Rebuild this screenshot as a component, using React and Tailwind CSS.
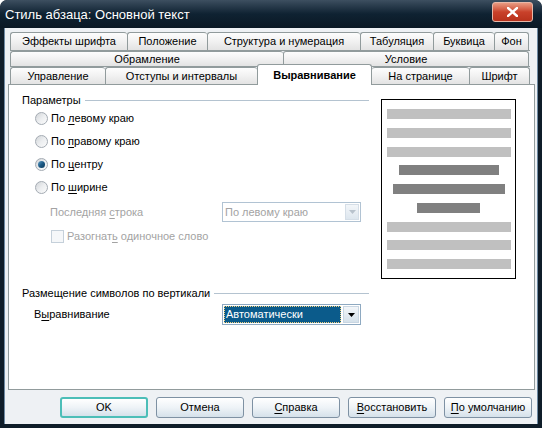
import React from "react";

const U = ({ children }) => <span className="underline underline-offset-[2px]">{children}</span>;

function Tab({ w, label, selected, noLeft, last }) {
  if (selected) {
    return (
      <div
        className={`relative z-10 -mb-px h-[21px] bg-white border-x border-t border-[#919b9c] rounded-t-[3px] flex items-center justify-center font-bold text-black`}
        style={{ width: w }}
      >
        {label}
      </div>
    );
  }
  return (
    <div
      className={`h-full flex items-center justify-center border-t border-[#919b9c] rounded-t-[3px] bg-gradient-to-b from-[#fdfdfd] via-[#f1f1f1] to-[#e3e3e3] text-black ${noLeft ? "" : "border-l"} ${last ? "border-r" : ""}`}
      style={{ width: w }}
    >
      {label}
    </div>
  );
}

function Radio({ checked, children }) {
  return (
    <div className="h-[23px] flex items-center pl-[26px]">
      <div className="w-[13px] h-[13px] rounded-full border border-[#a4abb3] bg-gradient-to-br from-[#d2d5d8] via-[#eceef0] to-[#fbfbfb] flex items-center justify-center">
        {checked && (
          <div className="w-[7px] h-[7px] rounded-full bg-gradient-to-br from-[#5fa0c8] via-[#1d5a85] to-[#0c3a5a]" />
        )}
      </div>
      <span className="ml-[3px]">{children}</span>
    </div>
  );
}

function Button({ children, def }) {
  return (
    <div
      className={`w-[88px] h-[21px] rounded-[3px] flex items-center justify-center bg-gradient-to-b from-[#ffffff] via-[#eef3f7] to-[#d5e1ea] text-black ${
        def ? "border-2 border-[#4cbeb8]" : "border border-[#7e91a3]"
      }`}
    >
      {children}
    </div>
  );
}

function Arrow({ color }) {
  return (
    <svg width="7" height="4" viewBox="0 0 7 4">
      <path d="M0 0 H7 L3.5 4 Z" fill={color} />
    </svg>
  );
}

export default function App() {
  return (
    <div className="w-[542px] h-[428px] bg-white">
      <div className="w-[542px] h-[428px] bg-[#0f1d29] rounded-t-[7px] flex flex-col px-[4px] pb-[4px] font-['Liberation_Sans',Arial,sans-serif] text-[11px] text-black overflow-hidden">
        {/* Title bar */}
        <div className="h-[28px] -mx-[4px] px-[5px] flex items-center justify-between bg-gradient-to-b from-[#3d4f60] via-[#0f2232] to-[#0a1824] rounded-t-[7px]">
          <span className="text-white text-[13px] pt-[1px]">Стиль абзаца: Основной текст</span>
          <div className="w-[41px] h-[20px] mr-[4px] mb-[4px] rounded-[3px] border border-[#e7b8a8] bg-gradient-to-b from-[#e89a82] via-[#c9412a] to-[#b8321c] flex items-center justify-center">
            <svg width="11" height="10" viewBox="0 0 11 10">
              <path d="M1 1 L10 9 M10 1 L1 9" stroke="white" strokeWidth="2.4" strokeLinecap="square" />
            </svg>
          </div>
        </div>

        {/* Body */}
        <div className="flex-1 bg-[#eef1f4] border-x border-[#6e8aa3] flex flex-col">
          {/* tabs */}
          <div className="pl-[5px] pt-[4px] flex flex-col">
            <div className="flex h-[18px]">
              <Tab w={117} label="Эффекты шрифта" />
              <Tab w={80} label="Положение" />
              <Tab w={153} label="Структура и нумерация" />
              <Tab w={73} label="Табуляция" />
              <Tab w={61} label="Буквица" />
              <Tab w={35} label="Фон" last />
            </div>
            <div className="flex h-[16px] border-t border-[#919b9c] w-[520px]">
              <Tab w={273} label="Обрамление" />
              <Tab w={246} label="Условие" last />
            </div>
            <div className="flex items-end h-[18px] border-t border-[#919b9c] w-[520px]">
              <Tab w={95} label="Управление" />
              <Tab w={152} label="Отступы и интервалы" />
              <Tab w={115} label="Выравнивание" selected />
              <Tab w={97} label="На странице" noLeft />
              <Tab w={61} label="Шрифт" last />
            </div>
          </div>

          {/* panel */}
          <div className="ml-[3px] w-[527px] h-[306px] bg-white border border-[#919b9c] flex">
            <div className="w-[360px] flex flex-col">
              <div className="mt-[8px] h-[14px] pl-[13px] flex items-center">
                <span>Параметры</span>
                <div className="ml-[4px] flex-1 h-px bg-[#b4c3d0]" />
              </div>
              <Radio>По <U>л</U>евому краю</Radio>
              <Radio>По <U>п</U>равому краю</Radio>
              <Radio checked>По <U>ц</U>ентру</Radio>
              <Radio>По <U>ш</U>ирине</Radio>

              <div className="mt-[3px] h-[20px] flex items-center pl-[41px]">
                <span className="w-[172px] text-[#a3a3a3]">
                  Последняя <U>с</U>трока
                </span>
                <div className="w-[139px] h-[20px] border border-[#b1c3d3] bg-white flex items-center justify-between pl-[2px] pr-[1px]">
                  <span className="text-[#a3a3a3]">По левому краю</span>
                  <div className="w-[14px] h-[16px] bg-gradient-to-b from-[#f3f6f9] to-[#dde6ee] border border-[#d5dee7] flex items-center justify-center">
                    <Arrow color="#b8c2cc" />
                  </div>
                </div>
              </div>

              <div className="mt-[6px] h-[16px] flex items-center pl-[42px]">
                <div className="w-[13px] h-[13px] border border-[#c5d0da] bg-[#f5f7f9]" />
                <span className="ml-[3px] text-[#a3a3a3]">
                  Разогнат<U>ь</U> одиночное слово
                </span>
              </div>

              <div className="mt-[42px] h-[14px] pl-[13px] flex items-center">
                <span>Размещение символов по вертикали</span>
                <div className="ml-[4px] flex-1 h-px bg-[#b4c3d0]" />
              </div>

              <div className="mt-[4px] h-[21px] flex items-center pl-[25px]">
                <span className="w-[188px]">
                  В<U>ы</U>равнивание
                </span>
                <div className="w-[139px] h-[21px] border border-[#8ea9c1] bg-white flex items-center p-[1px]">
                  <div className="flex-1 h-full bg-[#0b5b8b] outline-1 outline-dotted outline-[#f0d080] -outline-offset-1 text-white flex items-center pl-[2px]">
                    Автоматически
                  </div>
                  <div className="ml-[2px] w-[16px] h-full bg-gradient-to-b from-[#f3f6f9] to-[#d5e1ea] border border-[#c9d6e2] flex items-center justify-center">
                    <Arrow color="#000" />
                  </div>
                </div>
              </div>
            </div>

            <div className="ml-[12px] mt-[14px] w-[135px] h-[180px] border border-black bg-white flex flex-col items-center pt-[9px] gap-[8.75px]">
              <div className="w-[124px] h-[10px] bg-[#c0c0c0]" />
              <div className="w-[124px] h-[10px] bg-[#c0c0c0]" />
              <div className="w-[124px] h-[10px] bg-[#c0c0c0]" />
              <div className="w-[100px] h-[10px] bg-[#808080]" />
              <div className="w-[112px] h-[10px] bg-[#808080]" />
              <div className="w-[63px] h-[10px] bg-[#808080]" />
              <div className="w-[124px] h-[10px] bg-[#c0c0c0]" />
              <div className="w-[124px] h-[10px] bg-[#c0c0c0]" />
              <div className="w-[124px] h-[10px] bg-[#c0c0c0]" />
            </div>
          </div>

          {/* buttons */}
          <div className="mt-[7px] pl-[55px] flex gap-[8px]">
            <Button def>OK</Button>
            <Button>Отмена</Button>
            <Button>
              <span><U>С</U>правка</span>
            </Button>
            <Button>
              <span><U>В</U>осстановить</span>
            </Button>
            <Button>
              <span><U>П</U>о умолчанию</span>
            </Button>
          </div>
        </div>
      </div>
    </div>
  );
}
